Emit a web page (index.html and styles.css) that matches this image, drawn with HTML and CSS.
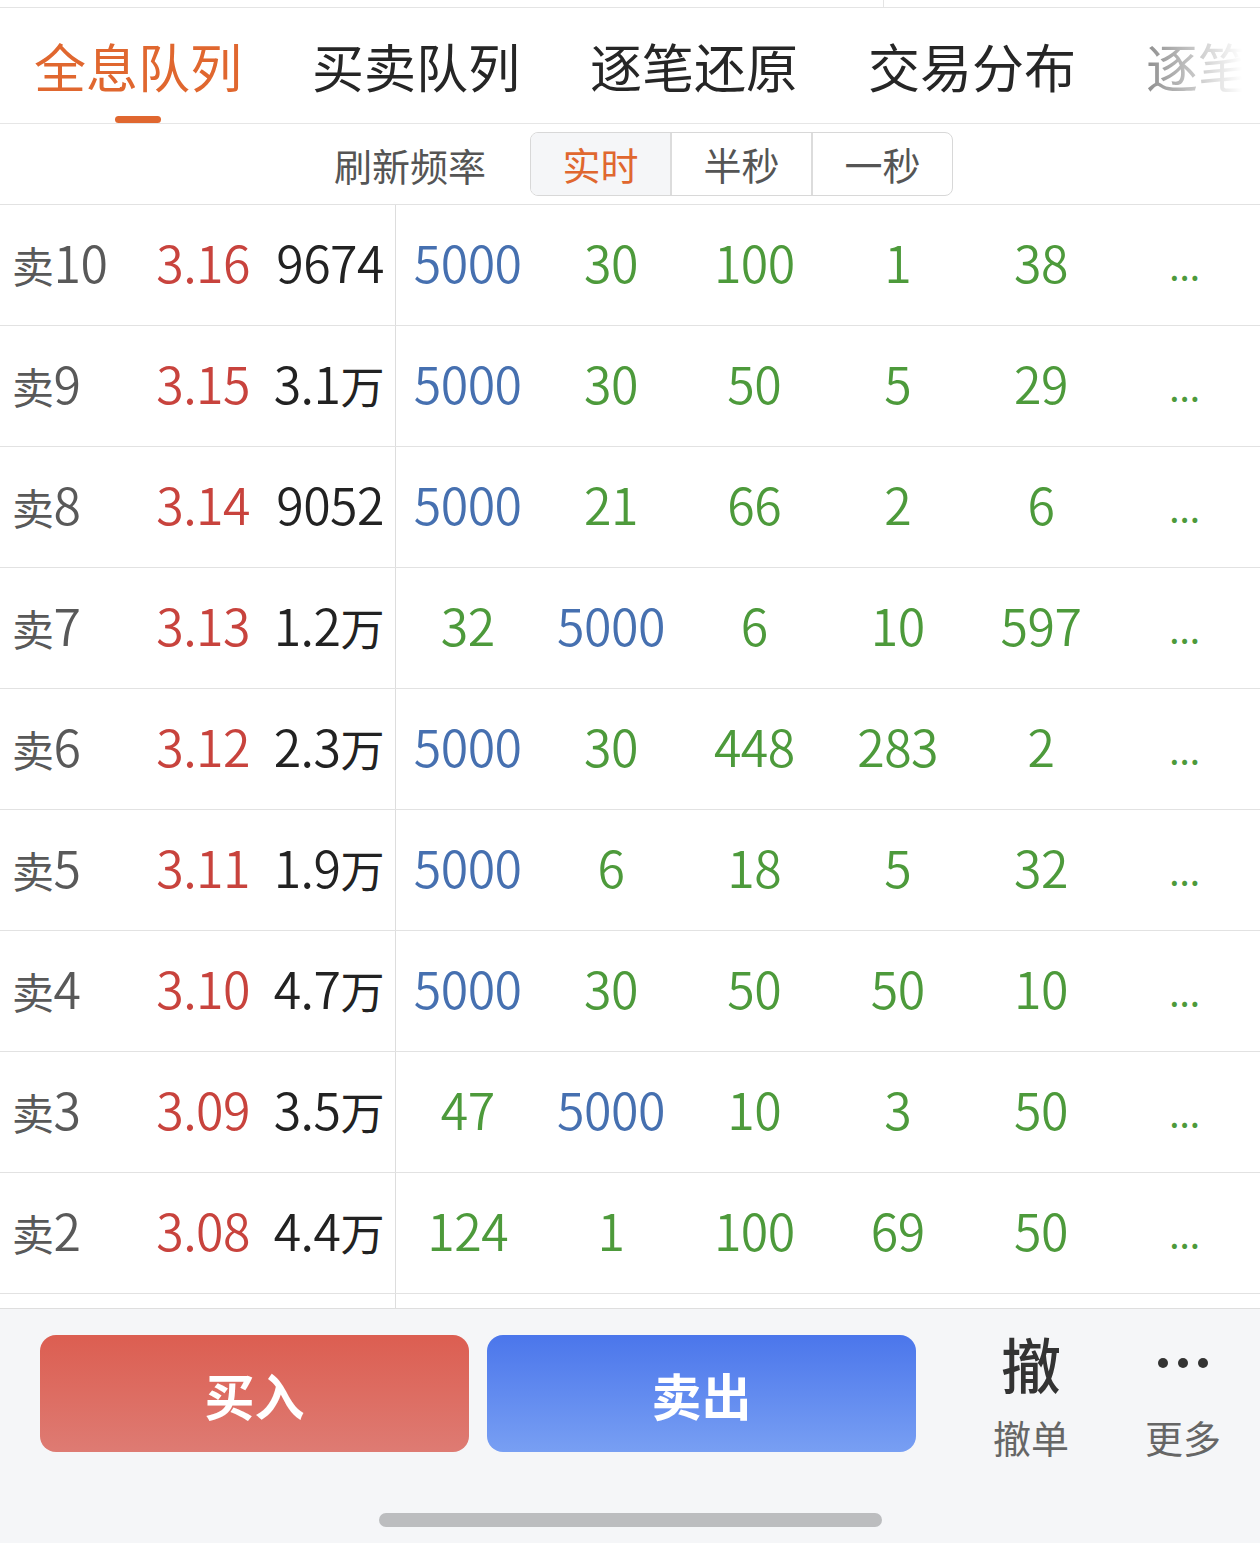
FILE: index.html
```html
<!DOCTYPE html>
<html lang="zh-CN">
<head>
    <meta charset="UTF-8">
    <title>全息队列</title>
    <link rel="stylesheet" href="styles.css">
</head>
<body>
    <div class="page">
        <div class="top-strip"><span class="top-split"></span></div>

        <div class="tabs">
            <ul class="tab-nav">
                <li class="tab-item active">全息队列</li>
                <li class="tab-item">买卖队列</li>
                <li class="tab-item">逐笔还原</li>
                <li class="tab-item">交易分布</li>
                <li class="tab-item">逐笔委托</li>
            </ul>
            <div class="tab-fade"></div>
        </div>

        <div class="refresh">
            <span class="refresh-label">刷新频率</span>
            <div class="seg">
                <span class="seg-item active">实时</span>
                <span class="seg-item">半秒</span>
                <span class="seg-item">一秒</span>
            </div>
        </div>

        <div class="queue">
            <div class="row">
                <div class="row-left"><span class="lbl"><i class="side">卖</i>10</span><span class="price">3.16</span><span class="vol">9674</span></div>
                <div class="row-right"><span class="b">5000</span><span class="g">30</span><span class="g">100</span><span class="g">1</span><span class="g">38</span><span class="g more">...</span></div>
            </div>
            <div class="row">
                <div class="row-left"><span class="lbl"><i class="side">卖</i>9</span><span class="price">3.15</span><span class="vol">3.1<i class="unit">万</i></span></div>
                <div class="row-right"><span class="b">5000</span><span class="g">30</span><span class="g">50</span><span class="g">5</span><span class="g">29</span><span class="g more">...</span></div>
            </div>
            <div class="row">
                <div class="row-left"><span class="lbl"><i class="side">卖</i>8</span><span class="price">3.14</span><span class="vol">9052</span></div>
                <div class="row-right"><span class="b">5000</span><span class="g">21</span><span class="g">66</span><span class="g">2</span><span class="g">6</span><span class="g more">...</span></div>
            </div>
            <div class="row">
                <div class="row-left"><span class="lbl"><i class="side">卖</i>7</span><span class="price">3.13</span><span class="vol">1.2<i class="unit">万</i></span></div>
                <div class="row-right"><span class="g">32</span><span class="b">5000</span><span class="g">6</span><span class="g">10</span><span class="g">597</span><span class="g more">...</span></div>
            </div>
            <div class="row">
                <div class="row-left"><span class="lbl"><i class="side">卖</i>6</span><span class="price">3.12</span><span class="vol">2.3<i class="unit">万</i></span></div>
                <div class="row-right"><span class="b">5000</span><span class="g">30</span><span class="g">448</span><span class="g">283</span><span class="g">2</span><span class="g more">...</span></div>
            </div>
            <div class="row">
                <div class="row-left"><span class="lbl"><i class="side">卖</i>5</span><span class="price">3.11</span><span class="vol">1.9<i class="unit">万</i></span></div>
                <div class="row-right"><span class="b">5000</span><span class="g">6</span><span class="g">18</span><span class="g">5</span><span class="g">32</span><span class="g more">...</span></div>
            </div>
            <div class="row">
                <div class="row-left"><span class="lbl"><i class="side">卖</i>4</span><span class="price">3.10</span><span class="vol">4.7<i class="unit">万</i></span></div>
                <div class="row-right"><span class="b">5000</span><span class="g">30</span><span class="g">50</span><span class="g">50</span><span class="g">10</span><span class="g more">...</span></div>
            </div>
            <div class="row">
                <div class="row-left"><span class="lbl"><i class="side">卖</i>3</span><span class="price">3.09</span><span class="vol">3.5<i class="unit">万</i></span></div>
                <div class="row-right"><span class="g">47</span><span class="b">5000</span><span class="g">10</span><span class="g">3</span><span class="g">50</span><span class="g more">...</span></div>
            </div>
            <div class="row">
                <div class="row-left"><span class="lbl"><i class="side">卖</i>2</span><span class="price">3.08</span><span class="vol">4.4<i class="unit">万</i></span></div>
                <div class="row-right"><span class="g">124</span><span class="g">1</span><span class="g">100</span><span class="g">69</span><span class="g">50</span><span class="g more">...</span></div>
            </div>
            <div class="row row-cut">
                <div class="row-left"></div>
                <div class="row-right"></div>
            </div>
        </div>

        <div class="bottom-bar">
            <div class="actions">
                <button class="btn btn-buy">买入</button>
                <button class="btn btn-sell">卖出</button>
                <div class="tool tool-cancel">
                    <span class="tool-icon">撤</span>
                    <span class="tool-label">撤单</span>
                </div>
                <div class="tool tool-more">
                    <span class="tool-icon">
                        <svg width="50" height="12" viewBox="0 0 50 12">
                            <circle cx="5" cy="6" r="5" fill="#333"/>
                            <circle cx="25" cy="6" r="5" fill="#333"/>
                            <circle cx="45" cy="6" r="5" fill="#333"/>
                        </svg>
                    </span>
                    <span class="tool-label">更多</span>
                </div>
            </div>
            <div class="home-bar"></div>
        </div>
    </div>
</body>
</html>
```

FILE: styles.css
```css
body{
    margin: 0;
    background: #fff;
    font-family: "Noto Sans CJK SC", "Noto Sans", sans-serif;
}
ul, li{
    list-style: none;
    padding: 0;
    margin: 0;
}
i{
    font-style: normal;
}
.page{
    width: 1260px;
    height: 1543px;
    overflow: hidden;
    display: flex;
    flex-direction: column;
}
.top-strip{
    height: 7px;
    border-bottom: 1px solid #e4e4e4;
    display: flex;
}
.top-split{
    margin-left: 883px;
    width: 1px;
    background: #e4e4e4;
}
.tabs{
    position: relative;
    height: 115px;
    border-bottom: 1px solid #e6e6e6;
    overflow: hidden;
}
.tab-nav{
    display: flex;
    height: 100%;
    padding-left: 34px;
    white-space: nowrap;
}
.tab-item{
    position: relative;
    display: flex;
    align-items: center;
    margin-right: 70px;
    font-size: 52px;
    color: #262626;
    flex-shrink: 0;
}
.tab-item.active{
    color: #e0672f;
}
.tab-item.active:after{
    content: "";
    position: absolute;
    left: 50%;
    bottom: 0;
    width: 46px;
    height: 7px;
    margin-left: -23px;
    border-radius: 4px;
    background: #e0672f;
}
.tab-fade{
    position: absolute;
    top: 0;
    right: 0;
    width: 120px;
    height: 100%;
    background: linear-gradient(to right, rgba(255,255,255,.45), #fff 85%);
}
.refresh{
    height: 80px;
    border-bottom: 1px solid #e2e2e2;
    display: flex;
    align-items: center;
    padding-left: 334px;
}
.refresh-label{
    font-size: 38px;
    color: #555;
    margin-right: 44px;
}
.seg{
    display: flex;
    border: 1px solid #d8d8d8;
    border-radius: 8px;
    overflow: hidden;
}
.seg-item{
    width: 139px;
    height: 62px;
    line-height: 62px;
    text-align: center;
    font-size: 38px;
    color: #555;
}
.seg-item + .seg-item{
    border-left: 2px solid #dcdcdc;
}
.seg-item.active{
    background: #f5f6f8;
    color: #e0672f;
}
.row{
    display: flex;
    height: 121px;
    box-sizing: border-box;
    padding-bottom: 8px;
    border-bottom: 1px solid #e2e2e2;
    font-size: 50px;
    font-weight: 350;
    letter-spacing: -0.5px;
    line-height: 1;
}
.row-left{
    width: 396px;
    margin-bottom: -8px;
    padding-bottom: 8px;
    border-right: 1px solid #dddddd;
    display: flex;
    align-items: center;
    padding-left: 12px;
    box-sizing: border-box;
}
.lbl{
    width: 134px;
    color: #595959;
}
.lbl .side{
    font-size: 42px;
    font-weight: 400;
}
.price{
    width: 104px;
    text-align: right;
    color: #c8433d;
}
.vol{
    width: 134px;
    text-align: right;
    color: #222;
}
.vol .unit{
    font-size: 44px;
    font-weight: 400;
}
.row-right{
    flex: 1;
    display: grid;
    grid-template-columns: repeat(6, 1fr);
    align-items: center;
    padding-right: 4px;
}
.row-right span{
    text-align: center;
}
.b{
    color: #4670b0;
}
.g{
    color: #4d9a3b;
}
.more{
    font-size: 40px;
    padding-top: 4px;
}
.row-cut{
    height: 14px;
    padding-bottom: 0;
    border-bottom: 0;
}
.row-cut .row-left{
    margin-bottom: 0;
    padding-bottom: 0;
}
.bottom-bar{
    flex: 1;
    background: #f5f6f8;
    border-top: 1px solid #dedede;
    display: flex;
    flex-direction: column;
}
.actions{
    display: flex;
    align-items: flex-start;
    padding: 26px 0 0 40px;
}
.btn{
    width: 429px;
    height: 117px;
    border: 0;
    border-radius: 16px;
    font-family: inherit;
    font-size: 50px;
    font-weight: 700;
    color: #fff;
    padding: 0;
}
.btn-buy{
    background: linear-gradient(#dc5e51, #de7b73);
}
.btn-sell{
    margin-left: 18px;
    background: linear-gradient(#4b76eb, #789ff3);
}
.tool{
    width: 110px;
    display: flex;
    flex-direction: column;
    align-items: center;
}
.tool-cancel{
    margin-left: 60px;
}
.tool-more{
    margin-left: 42px;
}
.tool-icon{
    height: 56px;
    line-height: 56px;
    font-size: 60px;
    font-weight: 500;
    color: #333;
    display: flex;
    align-items: center;
}
.tool-label{
    margin-top: 22px;
    font-size: 38px;
    line-height: 48px;
    color: #666;
}
.home-bar{
    width: 503px;
    height: 14px;
    margin: 52px auto 0;
    border-radius: 7px;
    background: #bcbdbf;
}
```
